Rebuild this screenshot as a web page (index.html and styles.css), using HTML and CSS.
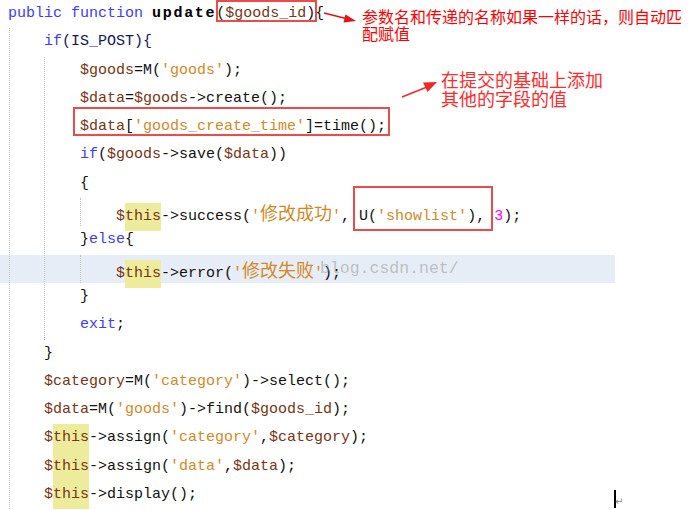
FILE: index.html
```html
<!DOCTYPE html>
<html lang="zh-CN">
<head>
  <meta charset="UTF-8">
  <title>update</title>
  <link rel="stylesheet" href="styles.css">
</head>
<body>
  <!-- Código -->
  <div class="editor">
    <div class="ln"><span class="kw">public function</span> <b class="fn">update</b><span class="mark mark-args">(<span class="var">$goods_id</span>)</span>{</div>
    <div class="block">
      <div class="ln"><span class="kw">if</span><span class="const">(IS_POST){</span></div>
      <div class="block">
        <div class="ln"><span class="var">$goods</span>=M(<span class="str">'goods'</span>);</div>
        <div class="ln"><span class="var">$data</span>=<span class="var">$goods</span>-&gt;create();</div>
        <div class="ln"><span class="mark mark-time"><span class="var">$data</span>[<span class="str">'goods_create_time'</span>]=time();</span></div>
        <div class="ln"><span class="kw">if</span>(<span class="var">$goods</span>-&gt;save(<span class="var">$data</span>))</div>
        <div class="ln">{</div>
        <div class="block">
          <div class="ln"><span class="var">$<span class="hl">this</span></span>-&gt;success(<span class="str">'<span class="cjk">修改成功</span>'</span>, <span class="mark mark-url">U(<span class="str">'showlist'</span>),</span> <span class="num">3</span>);</div>
        </div>
        <div class="ln">}<span class="kw">else</span>{</div>
        <div class="block">
          <div class="ln ln-active"><span class="var">$<span class="hl">this</span></span>-&gt;error(<span class="str">'<span class="cjk">修改失败</span>'</span>);<span class="watermark">blog.csdn.net/</span></div>
        </div>
        <div class="ln">}</div>
        <div class="ln"><span class="kw">exit</span>;</div>
      </div>
      <div class="ln">}</div>
      <div class="ln"><span class="var">$category</span>=M(<span class="str">'category'</span>)-&gt;select();</div>
      <div class="ln"><span class="var">$data</span>=M(<span class="str">'goods'</span>)-&gt;find(<span class="var">$goods_id</span>);</div>
      <div class="ln"><span class="var">$<span class="hl">this</span></span>-&gt;assign(<span class="str">'category'</span>,<span class="var">$category</span>);</div>
      <div class="ln"><span class="var">$<span class="hl">this</span></span>-&gt;assign(<span class="str">'data'</span>,<span class="var">$data</span>);</div>
      <div class="ln"><span class="var">$<span class="hl">this</span></span>-&gt;display();</div>
    </div>
  </div>

  <!-- Anotações -->
  <div class="note note-args">参数名和传递的名称如果一样的话，则自动匹配赋值</div>
  <div class="note note-time">在提交的基础上添加其他的字段的值</div>

  <svg class="arrows" width="690" height="510" viewBox="0 0 690 510">
    <line x1="324" y1="13" x2="346" y2="18.5" stroke="#e81010" stroke-width="1.5"/>
    <polygon points="356,21 343.5,22.5 345.5,14.5" fill="#e81010"/>
    <line x1="402" y1="97" x2="427" y2="87" stroke="#f02828" stroke-width="1.5"/>
    <polygon points="437,82 427.5,92 423,82.5" fill="#f02828"/>
  </svg>

  <div class="caret"></div>
  <div class="eol">↵</div>
</body>
</html>
```
FILE: styles.css
```css
/* Página */
body {
  margin: 0;
  padding: 0;
  width: 690px;
  height: 510px;
  overflow: hidden;
  position: relative;
  background: #fff;
}

/* Editor */
.editor {
  padding-left: 8px;
  font-family: "Liberation Mono", monospace;
  font-size: 15px;
  line-height: 28.3px;
  color: #111;
}

.ln {
  height: 28.3px;
  white-space: pre;
  position: relative;
}

.block {
  margin-left: 1px;
  padding-left: 34px;
  border-left: 1px dotted #c4c4c4;
}

.block .block {
  margin-left: 0;
  padding-left: 35px;
}

/* Linha ativa */
.ln-active::before {
  content: "";
  position: absolute;
  top: 0;
  left: -116px;
  width: 615px;
  height: 100%;
  background: #e7edf7;
  z-index: -1;
}

/* Cores */
.kw {
  color: #3c3cff;
}

.fn {
  font-weight: bold;
  letter-spacing: 1.7px;
  color: #000;
}

.var {
  color: #7a3412;
}

.str {
  color: #d4891f;
}

.num {
  color: #ff00ff;
}

.const {
  color: #16165a;
}

.cjk {
  font-family: "Noto Sans CJK SC", sans-serif;
  font-size: 18px;
}

.hl {
  display: inline-block;
  height: 28.3px;
  background: #ecec9c;
}

.watermark {
  position: absolute;
  left: 204px;
  top: 0;
  font-family: "Liberation Mono", monospace;
  font-size: 16.5px;
  color: rgba(150, 150, 150, 0.55);
}

/* Caixas vermelhas */
.mark {
  position: relative;
}

.mark::after {
  content: "";
  position: absolute;
  border: 2px solid rgba(230, 30, 30, 0.8);
}

.mark-args::after {
  top: -5px;
  bottom: 0;
  left: 0;
  right: -2px;
}

.mark-time::after {
  top: -11px;
  bottom: -1px;
  left: -7px;
  right: -4px;
}

.mark-url::after {
  top: -22px;
  bottom: -6px;
  left: -6px;
  right: -8px;
}

/* Anotações */
.note {
  position: absolute;
  color: #f00;
  font-family: "Noto Sans CJK SC", sans-serif;
}

.note-args {
  left: 362px;
  top: 8px;
  width: 322px;
  font-size: 16px;
  line-height: 17px;
}

.note-time {
  left: 441px;
  top: 70px;
  width: 164px;
  font-size: 18px;
  line-height: 19px;
  color: #ff2a2a;
}

.arrows {
  position: absolute;
  top: 0;
  left: 0;
  pointer-events: none;
}

/* Cursor */
.caret {
  position: absolute;
  left: 614px;
  top: 490px;
  width: 2px;
  height: 18px;
  background: #000;
}

.eol {
  position: absolute;
  left: 615px;
  top: 496px;
  font-family: "DejaVu Sans", sans-serif;
  font-size: 10px;
  color: #888;
}
```
